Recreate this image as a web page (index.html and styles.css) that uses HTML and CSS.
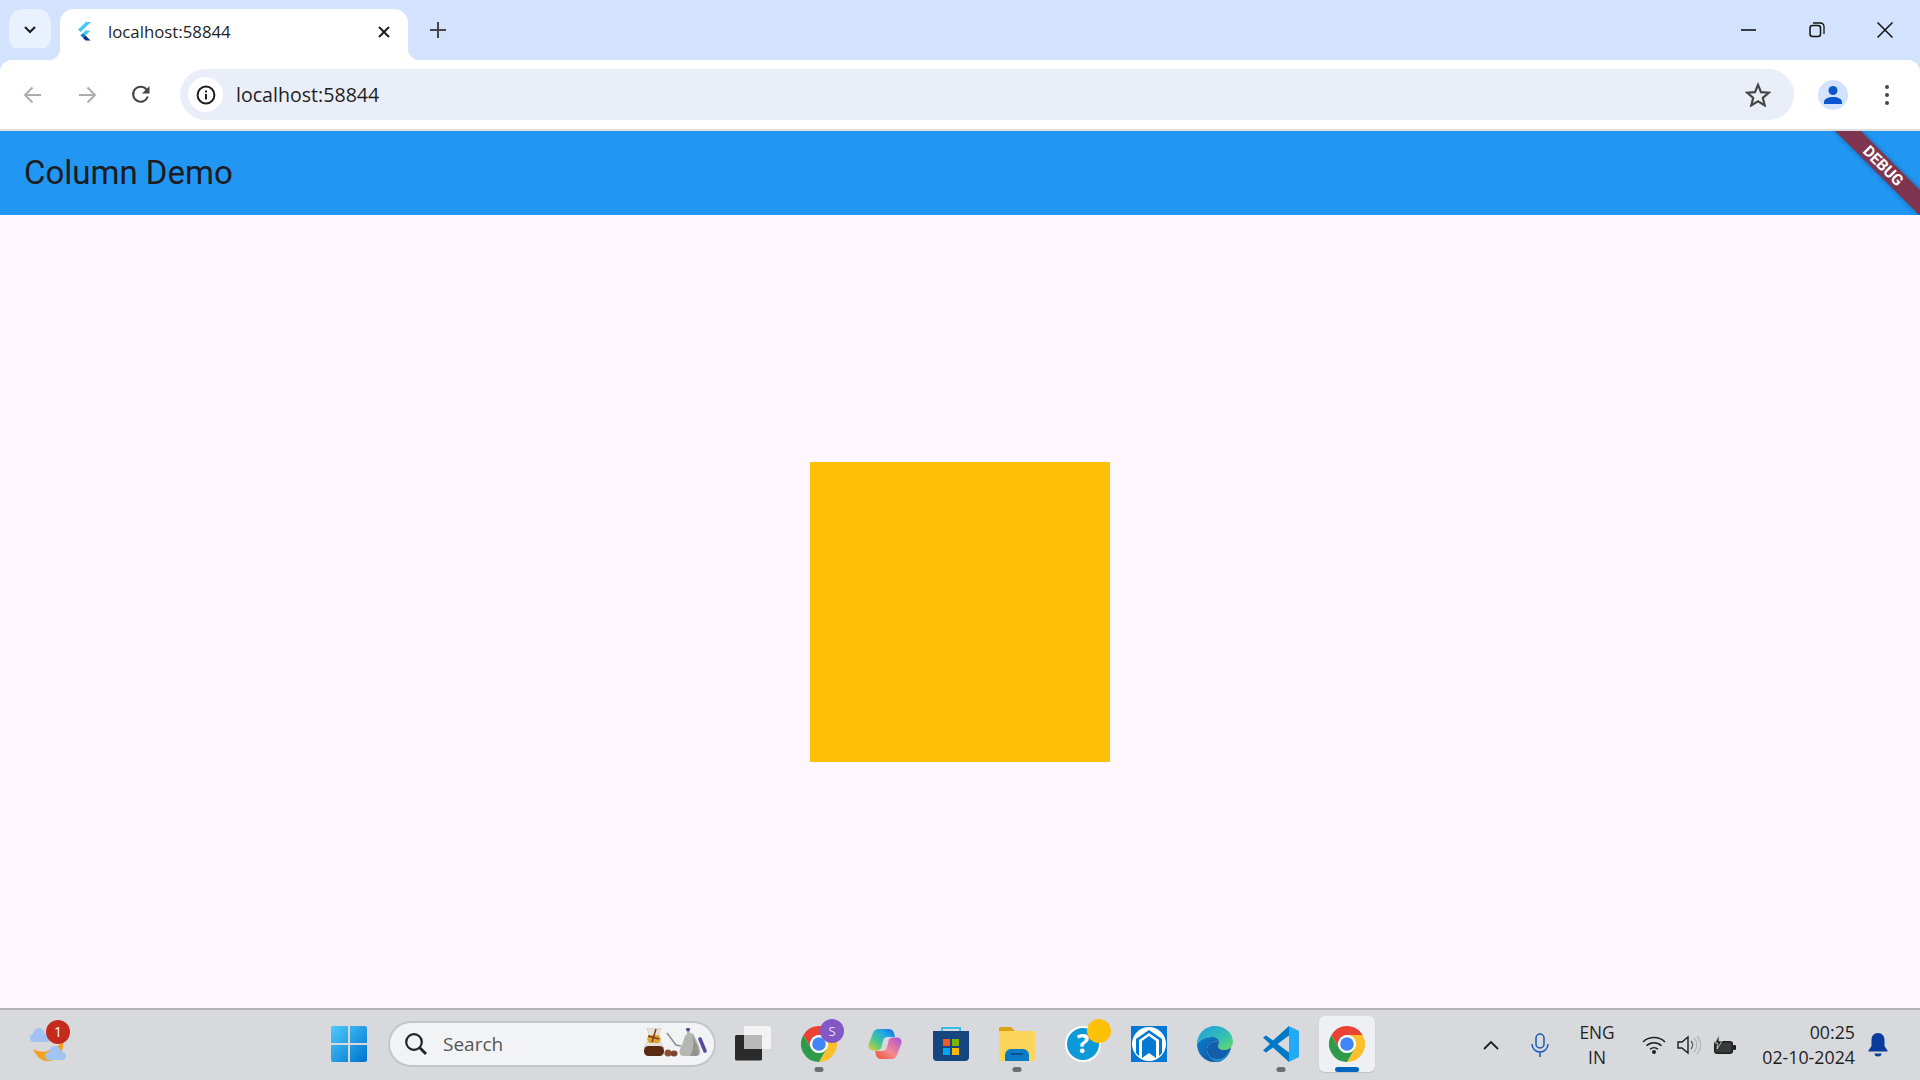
FILE: index.html
```html
<!DOCTYPE html>
<html lang="en">
  <head>
    <meta charset="UTF-8" />
    <title>localhost:58844</title>
    <link rel="stylesheet" href="styles.css">
  </head>
  <body>
    <svg class="defs" width="0" height="0">
      <symbol id="chrome-logo" viewBox="0 0 36 36">
        <circle cx="18" cy="18" r="17.8" fill="#fff"/>
        <path d="M33.6 9A18 18 0 0 0 2.4 9L10.2 22.5A9 9 0 0 1 18 9Z" fill="#ea4335"/>
        <path d="M33.6 9A18 18 0 0 0 2.4 9L10.2 22.5A9 9 0 0 1 18 9Z" fill="#fbc02d" transform="rotate(120 18 18)"/>
        <path d="M33.6 9A18 18 0 0 0 2.4 9L10.2 22.5A9 9 0 0 1 18 9Z" fill="#2e9b4a" transform="rotate(240 18 18)"/>
        <circle cx="18" cy="18" r="6.8" fill="#4285f4"/>
      </symbol>
    </svg>

    <div class="tabstrip">
      <button class="tab-list">
        <svg width="14" height="10" viewBox="0 0 14 10"><path d="M2 2l5 5 5-5" fill="none" stroke="#1f1f1f" stroke-width="2.2"/></svg>
      </button>
      <div class="tab">
        <svg class="favicon" width="16" height="19" viewBox="0 0 16 19">
          <path d="M10 0h5L4.500 10 2 7.500 0 9.500z" fill="#44c7f4"/>
          <path d="M9.500 8.500h5L9.500 13.500 7 11z" fill="#44c7f4"/>
          <path d="M7 11l2.500 2.500L7 16 4.500 13.500z" fill="#0f7fc4"/>
          <path d="M7 16l2.500-2.500 5 5h-5z" fill="#0d2f7c"/>
        </svg>
        <span class="tab-title">localhost:58844</span>
        <svg class="tab-close" width="12" height="12" viewBox="0 0 12 12"><path d="M1 1l10 10M11 1L1 11" stroke="#1f1f1f" stroke-width="2"/></svg>
      </div>
      <svg class="new-tab" width="16" height="16" viewBox="0 0 16 16"><path d="M8 0v16M0 8h16" stroke="#474747" stroke-width="2"/></svg>
      <div class="window-controls">
        <span class="win-btn"><svg width="16" height="16" viewBox="0 0 16 16"><path d="M0 8h15" stroke="#111" stroke-width="1.600"/></svg></span>
        <span class="win-btn"><svg width="16" height="16" viewBox="0 0 16 16"><rect x="1" y="3.500" width="10.500" height="11" rx="2.500" fill="none" stroke="#111" stroke-width="1.500"/><path d="M4 1h7.500a3.500 3.500 0 0 1 3.500 3.500V12" fill="none" stroke="#111" stroke-width="1.300"/></svg></span>
        <span class="win-btn"><svg width="16" height="16" viewBox="0 0 16 16"><path d="M.5.5l15 15M15.500.5l-15 15" stroke="#111" stroke-width="1.500"/></svg></span>
      </div>
    </div>

    <div class="toolbar">
      <span class="nav-btn"><svg width="20" height="18" viewBox="0 0 20 18"><path d="M18 9H2M9.500 1.500L2 9l7.500 7.500" fill="none" stroke="#adadad" stroke-width="2"/></svg></span>
      <span class="nav-btn"><svg width="20" height="18" viewBox="0 0 20 18"><path d="M2 9h16M10.500 1.500L18 9l-7.500 7.500" fill="none" stroke="#adadad" stroke-width="2"/></svg></span>
      <span class="nav-btn"><svg width="20" height="20" viewBox="0 0 20 20"><path d="M16.800 11.500A7.500 7.500 0 1 1 15.500 4.500" fill="none" stroke="#474747" stroke-width="2.100"/><path d="M18.500 1v7.500H11z" fill="#474747"/></svg></span>
      <div class="omnibox">
        <span class="site-info">
          <svg width="20" height="20" viewBox="0 0 20 20"><circle cx="10" cy="10" r="8.400" fill="none" stroke="#1f1f1f" stroke-width="2"/><rect x="9" y="9" width="2" height="5.500" fill="#1f1f1f"/><rect x="9" y="5.500" width="2" height="2" fill="#1f1f1f"/></svg>
        </span>
        <span class="url">localhost:58844</span>
        <svg class="star" width="26" height="25" viewBox="0 0 26 25"><path d="M13 2.800l3 7.300 7.800.6-6 5.100 1.900 7.600L13 19.300l-6.700 4.100 1.900-7.600-6-5.100 7.800-.6z" fill="none" stroke="#474747" stroke-width="2.200"/></svg>
      </div>
      <span class="avatar">
        <svg width="20" height="20" viewBox="0 0 20 20"><circle cx="10" cy="5.500" r="4.500" fill="#0b57d0"/><path d="M1 19v-2c0-3 4-5 9-5s9 2 9 5v2z" fill="#0b57d0"/></svg>
      </span>
      <span class="menu-dots"><i></i><i></i><i></i></span>
    </div>

    <header class="appbar">
      <h1 class="appbar-title">Column Demo</h1>
      <div class="banner-clip"><div class="banner">DEBUG</div></div>
    </header>

    <main class="content">
      <div class="amber-box"></div>
    </main>

    <footer class="taskbar">
      <div class="task-left">
        <span class="weather">
          <svg width="42" height="42" viewBox="0 0 42 42">
            <path d="M33 20c1 9-4 17-13 19-7 1-13-3-17-12 6 3 12 4 17 1 5-2 9-5 13-8z" fill="#f5a11f"/>
            <g fill="#a2c4f2">
              <rect x="0" y="12" width="20" height="8" rx="4"/>
              <circle cx="9" cy="12" r="6"/>
              <rect x="15" y="30" width="21" height="8" rx="4"/>
              <circle cx="25" cy="30" r="6"/>
            </g>
          </svg>
          <span class="weather-badge">1</span>
        </span>
      </div>

      <div class="task-center">
        <span class="task-slot">
          <svg width="36" height="36" viewBox="0 0 36 36">
            <defs><linearGradient id="win-grad" x1="0" y1="0" x2="1" y2="1"><stop offset="0" stop-color="#4dcbfb"/><stop offset="1" stop-color="#0072cf"/></linearGradient></defs>
            <path d="M2 0h15v17H0V2a2 2 0 0 1 2-2zM19 0h15a2 2 0 0 1 2 2v15H19zM0 19h17v17H2a2 2 0 0 1-2-2zM19 19h17v15a2 2 0 0 1-2 2H19z" fill="url(#win-grad)"/>
          </svg>
        </span>

        <div class="search">
          <svg width="24" height="24" viewBox="0 0 24 24"><circle cx="10" cy="10" r="7.800" fill="none" stroke="#222" stroke-width="2.200"/><path d="M15.500 15.500L22 22" stroke="#222" stroke-width="2.800"/></svg>
          <span class="search-label">Search</span>
          <svg class="search-art" width="66" height="30" viewBox="0 0 66 30">
            <path d="M3 0h14l-3 9 6 11H0L6 9z" fill="#e4e0da" stroke="#c9c5bf" stroke-width=".6"/>
            <path d="M5 7h10l2 4-2 4H5l-2-4z" fill="#dda736"/>
            <path d="M12 1L8 14M4 8l11 3" stroke="#7c3b1c" stroke-width="1.500"/>
            <rect x="0" y="18" width="20" height="10" rx="4.500" fill="#5b2a10"/>
            <ellipse cx="24" cy="25" rx="3.500" ry="3.500" fill="#8b4f38"/>
            <ellipse cx="30" cy="25.500" rx="3.500" ry="3" fill="#7d4431"/>
            <path d="M23 5l9 12 5 1" fill="none" stroke="#8f8f8f" stroke-width="1.500"/>
            <path d="M43 1.500h2l.5 3 4 1.500 5 11c2 5 3 10-1 11H39c-5-1-4-6-1-11l3-9 2-2z" fill="#b6b6b3"/>
            <path d="M48 6l5 11c2 5 3 10-1 11h-6c4-6 4-15 2-22z" fill="#94948f"/>
            <circle cx="44" cy="1.500" r="2" fill="#5a4aa0"/>
            <path d="M56 11l5 12" stroke="#5a4aa0" stroke-width="3.600" stroke-linecap="round"/>
          </svg>
        </div>

        <span class="task-slot">
          <svg width="36" height="36" viewBox="0 0 36 36">
            <rect x="9" y="0" width="27" height="23" rx="1.500" fill="#f3f3f3"/>
            <path d="M1.500 9H9v14h18v10a1.500 1.500 0 0 1-1.500 1.500h-24A1.500 1.500 0 0 1 0 33V10.500A1.500 1.500 0 0 1 1.500 9z" fill="#2b2b2b"/>
            <rect x="9" y="9" width="18" height="14" fill="#b9b9b9"/>
          </svg>
        </span>

        <span class="task-slot task-open">
          <svg width="36" height="36" viewBox="0 0 36 36"><use href="#chrome-logo"/></svg>
          <span class="app-badge">S</span>
        </span>

        <span class="task-slot">
          <svg width="34" height="32" viewBox="0 0 34 32">
            <defs>
              <linearGradient id="cop-a" x1="1" y1="0" x2="0" y2="1"><stop offset="0" stop-color="#1565d8"/><stop offset=".3" stop-color="#1fa8e8"/><stop offset=".65" stop-color="#4cc98a"/><stop offset="1" stop-color="#e8d02a"/></linearGradient>
              <linearGradient id="cop-b" x1="1" y1="0" x2="0" y2="1"><stop offset="0" stop-color="#ef4f35"/><stop offset=".45" stop-color="#f68a8f"/><stop offset="1" stop-color="#a74fe0"/></linearGradient>
            </defs>
            <path d="M11 1H21C23.500 1 25 2.500 26 5L27 9H19.500C17 9 15.500 10.500 15 13L13.500 19C13 21 11.500 22.500 9 22.500H5C1.500 22.500-.5 19.500.8 16L5 5C6 2.500 8 1 11 1Z" fill="url(#cop-a)"/>
            <path d="M11 1H21C23.500 1 25 2.500 26 5L27 9H19.500C17 9 15.500 10.500 15 13L13.500 19C13 21 11.500 22.500 9 22.500H5C1.500 22.500-.5 19.500.8 16L5 5C6 2.500 8 1 11 1Z" fill="url(#cop-b)" transform="rotate(180 17 16)"/>
          </svg>
        </span>

        <span class="task-slot">
          <svg width="36" height="36" viewBox="0 0 36 36">
            <path d="M9 6V2h18v4" fill="none" stroke="#32bfe8" stroke-width="2"/>
            <path d="M0 5h36v26a4 4 0 0 1-4 4H4a4 4 0 0 1-4-4z" fill="#17457f"/>
            <rect x="10" y="13" width="7" height="7" fill="#f05a28"/>
            <rect x="19" y="13" width="7" height="7" fill="#7ab800"/>
            <rect x="10" y="22" width="7" height="7" fill="#00a4ef"/>
            <rect x="19" y="22" width="7" height="7" fill="#ffb900"/>
          </svg>
        </span>

        <span class="task-slot task-open">
          <svg width="36" height="34" viewBox="0 0 36 34">
            <path d="M1 0h11l4 4h20v4H0V1z" fill="#d9a40f"/>
            <path d="M0 4h36v30H0z" fill="#fcd55a"/>
            <path d="M6 34v-6a6 6 0 0 1 6-6h12a6 6 0 0 1 6 6v6z" fill="#0a7cc7"/>
            <path d="M12 27h12" stroke="#07487e" stroke-width="1.600"/>
          </svg>
        </span>

        <span class="task-slot">
          <svg width="36" height="36" viewBox="0 0 36 36"><circle cx="18" cy="18" r="17" fill="#0d98d8" stroke="#fff" stroke-width="2"/><text class="help-mark" x="18" y="27" text-anchor="middle">?</text></svg>
          <span class="amber-dot"></span>
        </span>

        <span class="task-slot">
          <svg width="36" height="36" viewBox="0 0 36 36">
            <rect width="36" height="36" fill="#0078d4"/>
            <circle cx="18" cy="18" r="17" fill="#fff"/>
            <path d="M18 4L5 13v14l3 3V14L18 7l10 7v16l3-3V13z" fill="#0078d4"/>
            <path d="M11 15l7-5 7 5v17l-7-5-7 5z" fill="#0078d4"/>
          </svg>
        </span>

        <span class="task-slot">
          <svg width="36" height="36" viewBox="0 0 36 36">
            <defs>
              <linearGradient id="edge-a" x1="0" y1="0" x2="1" y2="1"><stop offset="0" stop-color="#1b9de2"/><stop offset=".6" stop-color="#35c1b1"/><stop offset="1" stop-color="#6fdc5c"/></linearGradient>
              <linearGradient id="edge-b" x1="0" y1="0" x2="1" y2="1"><stop offset="0" stop-color="#0c7fd0"/><stop offset="1" stop-color="#0c4f9c"/></linearGradient>
            </defs>
            <path d="M0 18C0 8 8 0 18 0c10 0 18 7 18 16 0 5-4 8-9 8-4 0-6-2-6-4 0-1 1-2 1-4 0-3-3-5-7-5C8 11 3 14 0 18z" fill="url(#edge-a)"/>
            <path d="M0 18c3-4 8-7 15-7 4 0 7 2 7 5-6-2-12 2-12 8 0 5 4 10 10 12-11 1-20-7-20-18z" fill="url(#edge-b)"/>
            <path d="M10 24c0-6 6-10 12-8 0 2-1 3-1 4 0 2 2 4 6 4 3 0 6-1 7-3-1 8-8 15-14 15-6-2-10-7-10-12z" fill="#125ea8"/>
            <path d="M20 36c-6-2-10-7-10-12 0 5 5 9 10 9 6 0 10-3 14-12-1 8-8 15-14 15z" fill="#1f8ad2"/>
          </svg>
        </span>

        <span class="task-slot task-open">
          <svg width="36" height="36" viewBox="0 0 36 36">
            <path fill-rule="evenodd" d="M26 0L10 14.500 3 9.500 0 11.500 7 18l-7 6.500 3 2 7-5L26 36zM26 9.500L14.500 18 26 26.500z" fill="#0078c8"/>
            <path d="M26 0l10 5v26l-10 5z" fill="#24a9f3"/>
          </svg>
        </span>

        <span class="task-slot task-active">
          <svg width="36" height="36" viewBox="0 0 36 36"><use href="#chrome-logo"/></svg>
        </span>
      </div>

      <div class="tray">
        <svg class="tray-chevron" width="16" height="10" viewBox="0 0 16 10"><path d="M1 9l7-7 7 7" fill="none" stroke="#1f1f1f" stroke-width="1.800"/></svg>
        <svg class="tray-mic" width="18" height="24" viewBox="0 0 18 24"><rect x="5" y="1" width="8" height="14" rx="4" fill="none" stroke="#1559b5" stroke-width="1.500"/><path d="M1 11a8 8 0 0 0 16 0M9 19v5" fill="none" stroke="#1559b5" stroke-width="1.500"/></svg>
        <div class="tray-lang"><span>ENG</span><span>IN</span></div>
        <svg class="tray-wifi" width="24" height="18" viewBox="0 0 24 18"><path d="M1 6a16 16 0 0 1 22 0M4.500 9.800a11 11 0 0 1 15 0M8 13.200a6 6 0 0 1 8 0" fill="none" stroke="#1f1f1f" stroke-width="1.500"/><circle cx="12" cy="16" r="2" fill="#1f1f1f"/></svg>
        <svg class="tray-volume" width="24" height="20" viewBox="0 0 24 20"><path d="M1 7h4l6-5v16l-6-5H1z" fill="none" stroke="#1f1f1f" stroke-width="1.400"/><path d="M14 6a6 6 0 0 1 0 8" fill="none" stroke="#555" stroke-width="1.300"/><path d="M17 3a10 10 0 0 1 0 14M20 1a13 13 0 0 1 0 18" fill="none" stroke="#b3b3b6" stroke-width="1.200"/></svg>
        <svg class="tray-battery" width="24" height="20" viewBox="0 0 24 20"><rect x="1.800" y="6.800" width="17.500" height="11.500" rx="2.500" fill="#3a3a3a" stroke="#1f1f1f" stroke-width="1.600"/><rect x="20" y="10" width="3" height="5" rx="1" fill="#1f1f1f"/><path d="M6 0L2 8h3l-1 6 5-8H6z" fill="#1f1f1f" stroke="#d8d9dd" stroke-width=".8"/></svg>
        <div class="tray-clock"><span>00:25</span><span>02-10-2024</span></div>
        <svg class="tray-bell" width="20" height="24" viewBox="0 0 20 24"><path d="M10 0c4 0 6.500 3 6.500 7v6l3 4.500v1H.5v-1l3-4.500V7c0-4 2.500-7 6.500-7z" fill="#0a3c9e"/><path d="M6.500 20.500h7a3.500 3 0 0 1-7 0z" fill="#0a3c9e"/></svg>
      </div>
    </footer>
  </body>
</html>
```

FILE: styles.css
```css
* {
  margin: 0;
  padding: 0;
  box-sizing: border-box;
}

body {
  width: 1920px;
  height: 1080px;
  overflow: hidden;
  display: flex;
  flex-direction: column;
  background: #fef7ff;
  font-family: "Open Sans", "Noto Sans", sans-serif;
  color: #1f1f1f;
}

.defs {
  position: absolute;
}

/* browser chrome */
.tabstrip {
  height: 60px;
  flex: none;
  display: flex;
  align-items: flex-end;
  background: #d3e3fd;
  padding-left: 9px;
}

.tab-list {
  width: 42px;
  height: 42px;
  margin-bottom: 9px;
  border: none;
  border-radius: 14px;
  background: #e9f0fe;
  display: flex;
  align-items: center;
  justify-content: center;
}

.tab {
  position: relative;
  width: 348px;
  height: 51px;
  margin-left: 9px;
  padding: 0 18px 0 16px;
  display: flex;
  align-items: center;
  background: #fff;
  border-radius: 14px 14px 0 0;
  z-index: 1;
}

.tab::before,
.tab::after {
  content: "";
  position: absolute;
  bottom: 0;
  width: 12px;
  height: 12px;
}

.tab::before {
  left: -12px;
  background: radial-gradient(circle at 0 0, #d3e3fd 12px, #fff 12.500px);
}

.tab::after {
  right: -12px;
  background: radial-gradient(circle at 100% 0, #d3e3fd 12px, #fff 12.500px);
}

.favicon {
  flex: none;
  margin-top: -6px;
}

.tab-title {
  margin-left: 16px;
  margin-top: -6px;
  font-size: 16.800px;
  flex: 1;
}

.tab-close {
  margin-top: -6px;
}

.new-tab {
  margin: 0 0 22px 22px;
}

.window-controls {
  margin-left: auto;
  margin-right: 1px;
  display: flex;
  height: 60px;
}

.win-btn {
  width: 68px;
  display: flex;
  align-items: center;
  justify-content: center;
}

.toolbar {
  position: relative;
  height: 71px;
  flex: none;
  display: flex;
  align-items: center;
  padding-left: 6px;
  background: #fff;
  border-bottom: 2px solid #dedfe1;
  border-radius: 12px 12px 0 0;
  box-shadow: 0 -12px 0 #d3e3fd;
}

.nav-btn {
  width: 54px;
  display: flex;
  justify-content: center;
}

.omnibox {
  width: 1614px;
  height: 51px;
  margin-left: 12px;
  padding: 0 23px 0 8px;
  display: flex;
  align-items: center;
  background: #e9eef8;
  border-radius: 26px;
}

.site-info {
  width: 35px;
  height: 35px;
  border-radius: 50%;
  background: #fff;
  display: flex;
  align-items: center;
  justify-content: center;
}

.url {
  margin-left: 13px;
  font-size: 19.600px;
  flex: 1;
}

.avatar {
  width: 30px;
  height: 30px;
  margin-left: 24px;
  border-radius: 50%;
  background: #d3e3fd;
  display: flex;
  align-items: center;
  justify-content: center;
}

.menu-dots {
  margin-left: 37px;
  display: flex;
  flex-direction: column;
  gap: 4px;
}

.menu-dots i {
  width: 4px;
  height: 4px;
  border-radius: 50%;
  background: #474747;
}

/* flutter app */
.appbar {
  position: relative;
  height: 84px;
  flex: none;
  display: flex;
  align-items: center;
  padding: 0 0 2px 24px;
  background: #2196f3;
}

.appbar-title {
  font-family: Roboto, sans-serif;
  font-weight: 400;
  font-size: 33px;
  color: #1d1b20;
}

.banner-clip {
  position: absolute;
  top: 0;
  right: 0;
  width: 90px;
  height: 84px;
  overflow: hidden;
}

.banner {
  position: absolute;
  top: 26px;
  left: -27px;
  width: 160px;
  height: 18px;
  transform: rotate(45deg);
  background: #7f344f;
  box-shadow: 0 0 5px rgba(0, 0, 0, 0.35);
  color: #fff;
  font-family: Roboto, sans-serif;
  font-weight: 700;
  font-size: 15.500px;
  line-height: 18px;
  text-align: center;
}

.content {
  flex: 1;
  display: flex;
  align-items: center;
  justify-content: center;
  background: #fef7ff;
}

.amber-box {
  width: 300px;
  height: 300px;
  background: #ffc107;
}

/* windows taskbar */
.taskbar {
  height: 72px;
  flex: none;
  display: flex;
  align-items: center;
  background: #d8d9dd;
  border-top: 2px solid #b4b4b7;
}

.task-left {
  width: 316px;
  padding-left: 30px;
  flex: none;
}

.weather {
  position: relative;
  display: block;
  width: 42px;
  height: 42px;
  margin-top: -4px;
}

.weather-badge {
  position: absolute;
  top: -2px;
  left: 16px;
  width: 24px;
  height: 24px;
  border-radius: 50%;
  background: #c42b1c;
  color: #fff;
  font-size: 14px;
  line-height: 24px;
  text-align: center;
}

.task-center {
  display: flex;
  align-items: center;
  margin-bottom: 2px;
}

.task-slot {
  position: relative;
  width: 66px;
  height: 56px;
  display: flex;
  align-items: center;
  justify-content: center;
}

.task-open::after,
.task-active::after {
  content: "";
  position: absolute;
  left: 50%;
  transform: translateX(-50%);
}

.task-open::after {
  bottom: 0;
  width: 9px;
  height: 5px;
  border-radius: 3px;
  background: #6e6e70;
}

.task-active {
  width: 56px;
  margin: 0 5px;
  border-radius: 6px;
  background: #eef0f3;
  box-shadow: 0 1px 1px rgba(0, 0, 0, 0.12);
}

.task-active::after {
  bottom: 0;
  width: 24px;
  height: 5px;
  border-radius: 3px;
  background: #0067c0;
}

.app-badge {
  position: absolute;
  top: 3px;
  left: 34px;
  width: 24px;
  height: 24px;
  border-radius: 50%;
  background: #8258c6;
  color: #e5ddf5;
  font-size: 13px;
  line-height: 24px;
  text-align: center;
}

.amber-dot {
  position: absolute;
  top: 3px;
  left: 37px;
  width: 24px;
  height: 24px;
  border-radius: 50%;
  background: #ffc107;
}

.help-mark {
  font-family: "Open Sans", sans-serif;
  font-weight: 700;
  font-size: 26px;
  fill: #fff;
}

.search {
  width: 328px;
  height: 46px;
  margin: 0 4px 0 6px;
  padding: 0 4px 0 14px;
  display: flex;
  align-items: center;
  background: #f2f3f5;
  border: 2px solid #c4c5c9;
  border-radius: 23px;
}

.search-label {
  margin-left: 15px;
  font-size: 19px;
  color: #555;
  flex: 1;
}

.search-art {
  margin-bottom: 2px;
}

.tray {
  position: relative;
  flex: 1;
  display: flex;
  align-items: center;
  padding-left: 103px;
}

.tray-mic {
  margin-left: 32px;
}

.tray-lang,
.tray-clock {
  display: flex;
  flex-direction: column;
  line-height: 25px;
  color: #1f1f1f;
}

.tray-lang {
  width: 40px;
  margin-left: 28px;
  align-items: center;
  font-size: 17.300px;
}

.tray-clock {
  width: 96px;
  margin-left: 22px;
  align-items: flex-end;
  font-size: 17.800px;
}

.tray-wifi {
  margin-left: 25px;
}

.tray-volume {
  margin-left: 11px;
}

.tray-battery {
  margin-left: 12px;
}

.tray-bell {
  margin-left: 13px;
}
```
